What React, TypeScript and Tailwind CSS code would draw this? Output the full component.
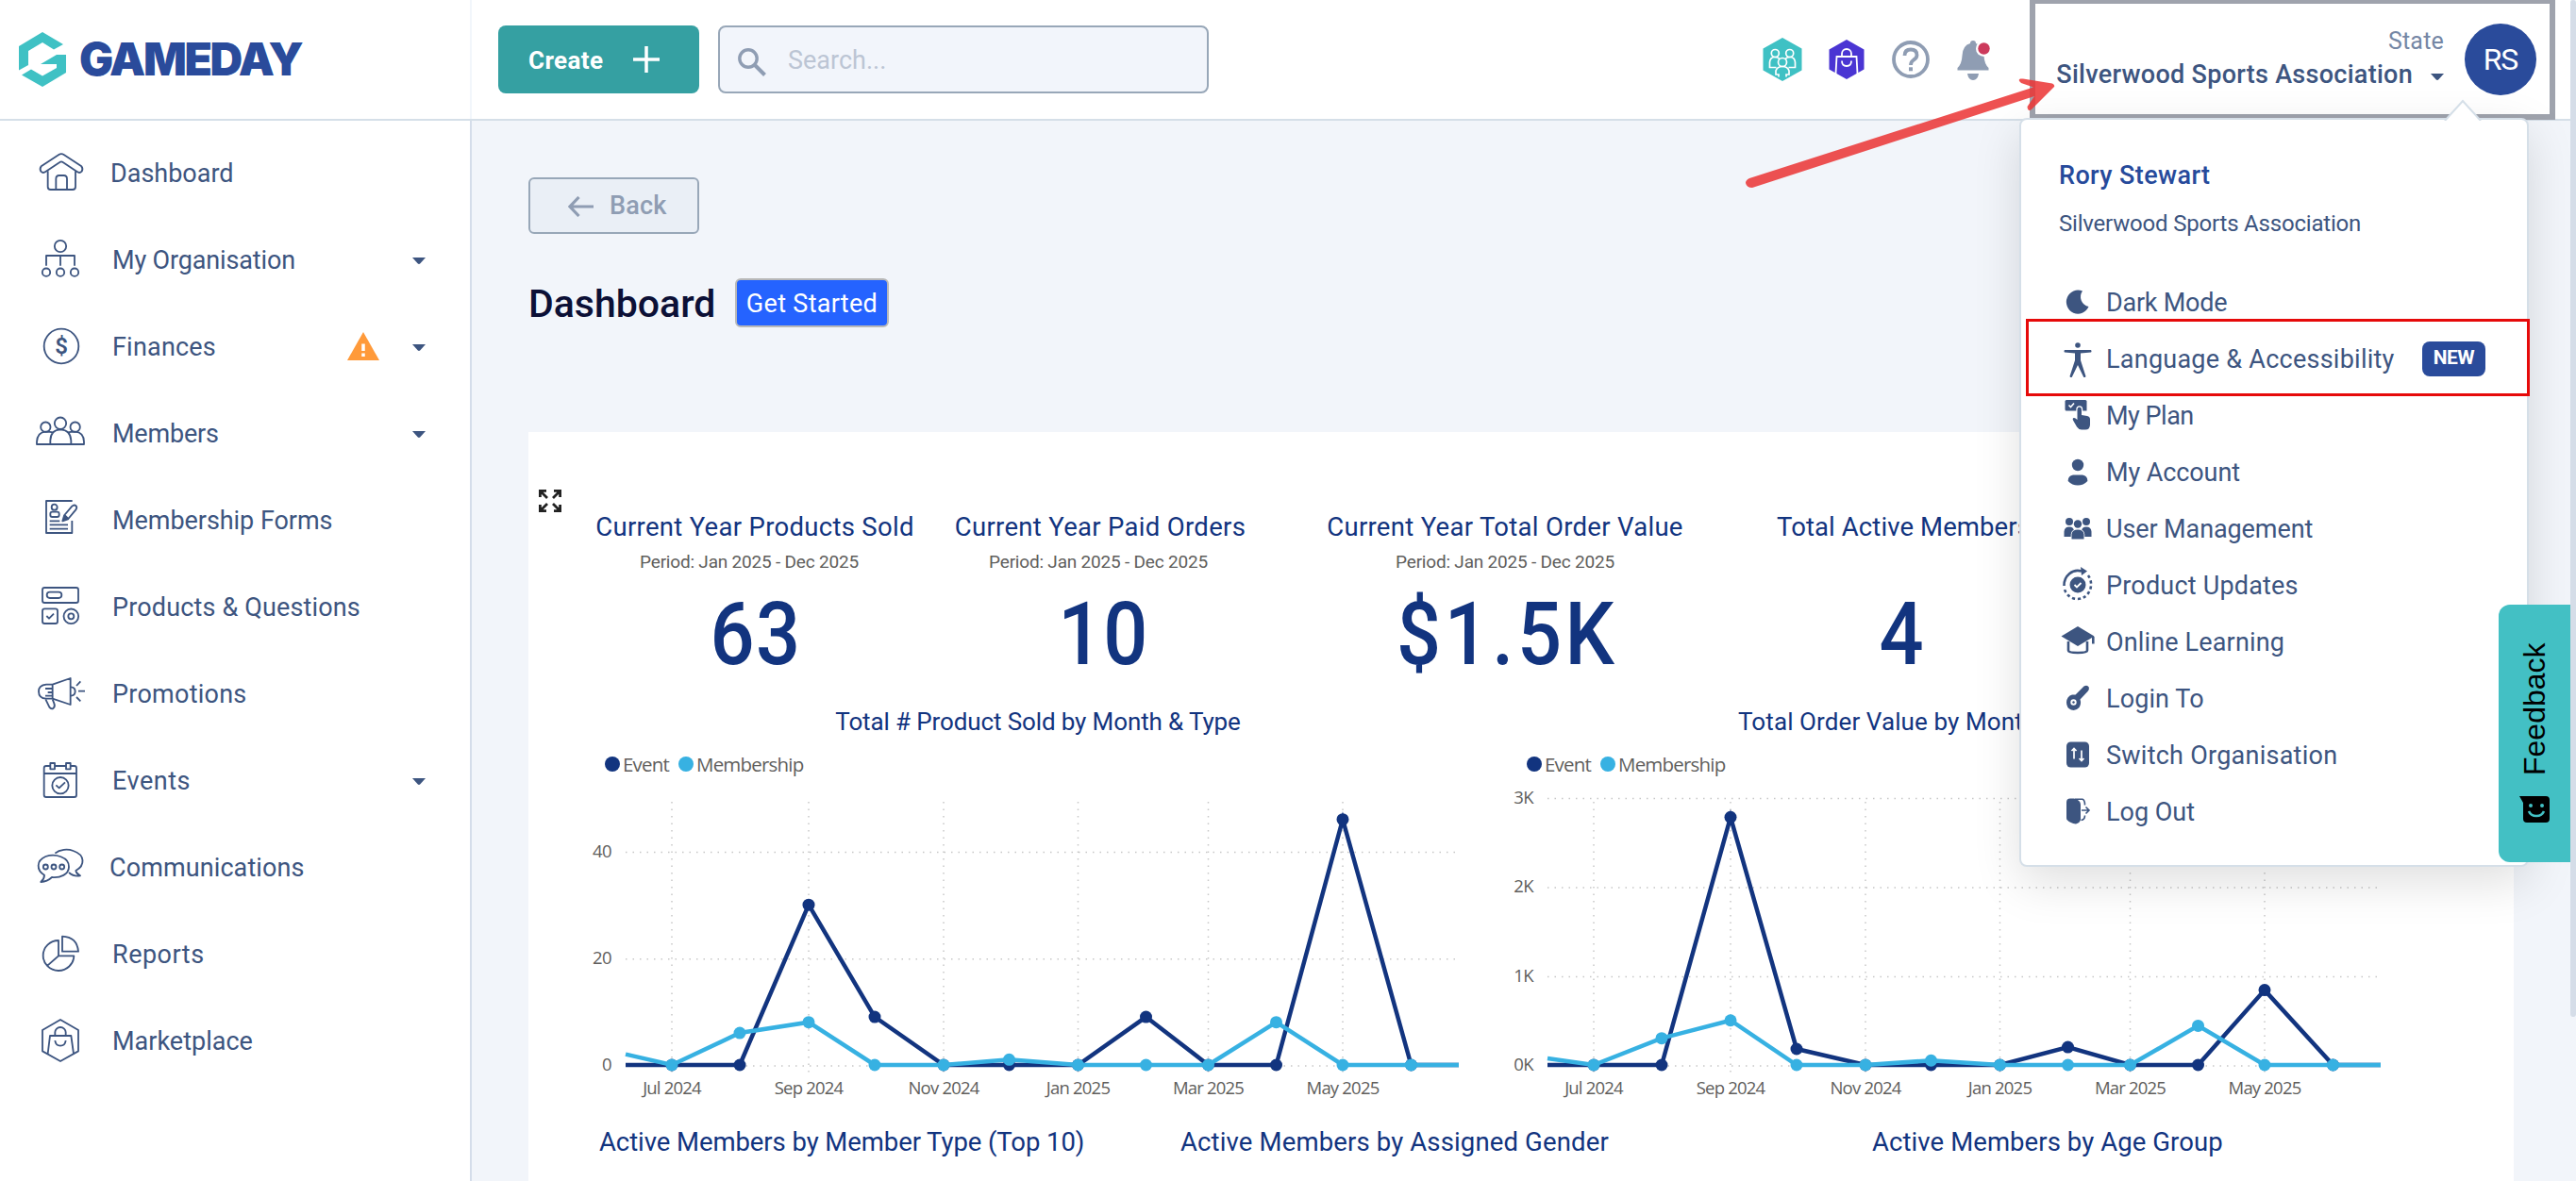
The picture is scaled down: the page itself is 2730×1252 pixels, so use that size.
import type { ReactNode } from 'react';

interface NavItem {
  label: string;
  icon: ReactNode;
  labelClass: string;
  expandable?: boolean;
  warning?: boolean;
}

interface MenuItem {
  label: string;
  icon: ReactNode;
  labelClass: string;
  isNew?: boolean;
}

function NavIcon({ children }: { children: ReactNode }) {
  return (
    <svg viewBox="-84 -84 168 168" className="h-14 w-14 shrink-0" fill="none" stroke="currentColor" strokeWidth="5.5" strokeLinejoin="round">
      {children}
    </svg>
  );
}

function MenuIcon({ children }: { children: ReactNode }) {
  return (
    <svg viewBox="-20 -20 40 40" className="h-10 w-10 shrink-0" fill="currentColor">
      {children}
    </svg>
  );
}

function Caret() {
  return (
    <svg viewBox="0 0 14 7" className="h-[7px] w-[14px] shrink-0" fill="#3d5580">
      <path d="M0 0h14L8.4 6.3Q7 7.6 5.6 6.3Z" />
    </svg>
  );
}

const navItems: NavItem[] = [
  {
    label: 'Dashboard',
    labelClass: '-ml-[2px]',
    icon: (
      <NavIcon>
        <path d="M-64-20-8-57Q0-62 8-57L64-20Q70-12 65-4 58 3 50-3L5-33Q0-37-5-33L-50-3Q-58 3-65-4-70-12-64-20Z" />
        <path d="M-43-5V45Q-43 54-34 54H36Q45 54 45 45V-5M-17 54V20Q-17 9-7 9H8Q18 9 18 20V54" />
      </NavIcon>
    ),
  },
  {
    label: 'My Organisation',
    labelClass: 'tracking-[-0.15px]',
    expandable: true,
    icon: (
      <NavIcon>
        <circle cx="-3" cy="-42" r="18.5" />
        <path d="M-48 20V-12H42V20M-3-12V20" />
        <circle cx="-48" cy="41" r="12.5" />
        <circle cx="-3" cy="41" r="12.5" />
        <circle cx="42" cy="41" r="12.5" />
      </NavIcon>
    ),
  },
  {
    label: 'Finances',
    labelClass: 'tracking-[0.2px]',
    expandable: true,
    warning: true,
    icon: (
      <NavIcon>
        <circle cx="0" cy="0" r="55" />
        <text x="0" y="25" textAnchor="middle" fontSize="72" fontWeight="600" fontFamily="Roboto" fill="currentColor" stroke="none">$</text>
      </NavIcon>
    ),
  },
  {
    label: 'Members',
    labelClass: 'tracking-[-0.2px]',
    expandable: true,
    icon: (
      <NavIcon>
        <circle cx="-3" cy="-31" r="18.5" />
        <circle cx="-50" cy="-19" r="15.5" />
        <circle cx="44" cy="-19" r="15.5" />
        <path d="M-35 36V24Q-34-10-3-11 29-10 31 24V36M-26-2Q-36-4-50-4-76-2-78 28V36H72V28Q71-2 44-4 30-4 20-2" />
      </NavIcon>
    ),
  },
  {
    label: 'Membership Forms',
    labelClass: 'tracking-[-0.05px]',
    icon: (
      <NavIcon>
        <path d="M35-60H-48V42H34V3M-37 4H-5M-37 16H21M-37 29H21" />
        <circle cx="-22" cy="-40" r="9" />
        <rect x="-35" y="-25" width="28" height="16" rx="6" />
        <path d="M10-15 34-43Q41-50 47-44 51-38 46-32L22-3Z" />
        <path d="M9-13 21-2 4 4Z" fill="currentColor" />
      </NavIcon>
    ),
  },
  {
    label: 'Products & Questions',
    labelClass: 'tracking-[0.15px]',
    icon: (
      <NavIcon>
        <rect x="-60" y="-60" width="114" height="48" rx="7" />
        <rect x="-46" y="-46" width="47" height="19" rx="9.5" />
        <rect x="-60" y="7" width="48" height="47" rx="7" />
        <path d="M-47 30-39 38-24 23" />
        <circle cx="31" cy="31" r="23.5" />
        <circle cx="31" cy="31" r="9" />
      </NavIcon>
    ),
  },
  {
    label: 'Promotions',
    labelClass: 'tracking-[0.25px]',
    icon: (
      <NavIcon>
        <path d="M-28-28H-48Q-72-26-72-6-72 16-48 17H-28L29 36V-48L-28-28V17M-51-15H-28M-43-3H-28M-51 8H-28" />
        <path d="M30-20Q44-19 44-6 44 7 30 8M-50 19-38 44Q-32 52-25 47-19 42-23 32L-28 19M48-24 61-38M54-7H75M48 12 61 25" />
      </NavIcon>
    ),
  },
  {
    label: 'Events',
    labelClass: 'tracking-[0.5px]',
    expandable: true,
    icon: (
      <NavIcon>
        <rect x="-55" y="-45" width="103" height="99" rx="7" />
        <path d="M-55-21H48" />
        <rect x="-35" y="-54" width="14" height="19" fill="white" />
        <rect x="15" y="-54" width="14" height="19" fill="white" />
        <circle cx="-3" cy="17" r="26" />
        <path d="M-17 16-7 25 12 7" />
      </NavIcon>
    ),
  },
  {
    label: 'Communications',
    labelClass: '-ml-[3px] tracking-[0.1px]',
    icon: (
      <NavIcon>
        <path d="M-54 26C-80 10-80-20-50-33-20-43 25-32 24 0 24 24-4 36-30 33Q-45 47-65 48-54 38-54 26ZM-20-43C-5-56 20-58 38-51 76-38 76-5 46 12Q48 22 60 28 40 32 24 18" />
        <circle cx="-50" cy="0" r="7.5" />
        <circle cx="-24" cy="0" r="7.5" />
        <circle cx="2" cy="0" r="7.5" />
      </NavIcon>
    ),
  },
  {
    label: 'Reports',
    labelClass: 'tracking-[0.5px]',
    icon: (
      <NavIcon>
        <path d="M-9-42A49 48 0 1 0 40 7H-9ZM-9 7-44 38M3-55V-7H54Q50-53 3-55Z" />
      </NavIcon>
    ),
  },
  {
    label: 'Marketplace',
    labelClass: '',
    icon: (
      <NavIcon>
        <path d="M-3-66 54-33V34L-3 66-60 34V-33ZM-43 42-36-15H31L39 42M-20-17V-26A17 16 0 0 1 14-26V-17M-20 0Q-18 17-3 17 12 17 14 0" />
      </NavIcon>
    ),
  },
];

const menuItems: MenuItem[] = [
  {
    label: 'Dark Mode',
    labelClass: 'tracking-[-0.25px]',
    icon: (
      <MenuIcon>
        <path d="M5-11.500A12.300 12.600 0 1 0 11.500 5 10.500 10.500 0 0 1 5-11.500Z" />
      </MenuIcon>
    ),
  },
  {
    label: 'Language & Accessibility',
    labelClass: 'tracking-[0.25px]',
    isNew: true,
    icon: (
      <MenuIcon>
        <circle cx="0" cy="-14" r="2.800" />
        <path d="M-14-9H14Q15-7.500 14-6.500L3-5.500V2L8.500 19Q7.500 21 6.300 20L0 7-6.300 20Q-7.500 21-8.500 19L-3 2V-5.500L-14-6.500Q-15-7.500-14-9Z" />
      </MenuIcon>
    ),
  },
  {
    label: 'My Plan',
    labelClass: 'tracking-[-0.5px]',
    icon: (
      <MenuIcon>
        <path d="M-12-16H8Q9.500-16 9.500-14.500V-4.500H-12Q-13.500-4.500-13.500-6V-14.500Q-13.500-16-12-16Z" />
        <path d="M-9.500-10.500-7.500-8.500-4-12.500" fill="none" stroke="white" strokeWidth="1.600" />
        <path d="M-.5 1V-6Q-.5-8.500 1.800-8.500 4-8.500 4-6V0L10 1Q13 1.500 13 4.500V10Q13 15.500 8 15.500H4Q1 15.500-1 12.500L-5 5.500Q-6 3.500-4.500 3-3 2.500-.5 5Z" stroke="white" strokeWidth="2.400" paintOrder="stroke" />
      </MenuIcon>
    ),
  },
  {
    label: 'My Account',
    labelClass: 'tracking-[-0.1px]',
    icon: (
      <MenuIcon>
        <circle cx="0" cy="-7" r="6.200" />
        <path d="M-5 3.500H5Q10.500 4.500 10.300 10 6 14.500 0 14.500-6 14.500-10.300 10-10.500 4.500-5 3.500Z" />
      </MenuIcon>
    ),
  },
  {
    label: 'User Management',
    labelClass: 'tracking-[-0.1px]',
    icon: (
      <MenuIcon>
        <circle cx="-9" cy="-7" r="4" />
        <circle cx="9" cy="-7" r="4" />
        <path d="M-14.500 9V3.500Q-14-1.500-9-1.500T-4 3.500V9ZM14.500 9V3.500Q14-1.500 9-1.500T4 3.500V9Z" />
        <g stroke="white" strokeWidth="1.600" paintOrder="stroke">
          <path d="M-6.500 11.500V6.500Q-6 1.500 0 1.500T6.500 6.500V11.500Z" />
          <circle cx="0" cy="-4.500" r="4.200" />
        </g>
      </MenuIcon>
    ),
  },
  {
    label: 'Product Updates',
    labelClass: 'tracking-[0.2px]',
    icon: (
      <MenuIcon>
        <circle cx="0" cy="0" r="8.500" />
        <path d="M-3.500 0-1 2.500 3.500-2" fill="none" stroke="white" strokeWidth="1.800" />
        <path d="M-14.500 1A14.500 15.500 0 0 1 4-14.500" fill="none" stroke="currentColor" strokeWidth="2.600" />
        <path d="M3-19 10-14.500 4-10Z" />
        <path d="M11-10A14.500 15.500 0 1 1-14 5" fill="none" stroke="currentColor" strokeWidth="2.600" strokeDasharray="3.200 2.800" />
      </MenuIcon>
    ),
  },
  {
    label: 'Online Learning',
    labelClass: 'tracking-[0.15px]',
    icon: (
      <MenuIcon>
        <path d="M-17.500-5.500 0-16 17.500-5.500 0 5Z" />
        <path d="M-10 0V9.500Q-10 12 0 12T10 9.500V0M16.300-5V2.500" fill="none" stroke="currentColor" strokeWidth="2.600" />
      </MenuIcon>
    ),
  },
  {
    label: 'Login To',
    labelClass: 'tracking-[0.1px]',
    icon: (
      <MenuIcon>
        <path fillRule="evenodd" d="M6.500-12.500Q10-14.500 11.800-11.500 12.500-9 10.500-7L2.500 1.500Q4 6 1.500 10-2 14-7 12.500-12 10.500-12 4.500-11.500-2-6-3.500H-2.500ZM-4.500 1.300A3.200 3.200 0 1 0-4.500 7.700 3.200 3.200 0 1 0-4.500 1.300Z" />
        <circle cx="-4.500" cy="4.500" r="1.200" />
      </MenuIcon>
    ),
  },
  {
    label: 'Switch Organisation',
    labelClass: 'tracking-[0.25px]',
    icon: (
      <MenuIcon>
        <rect x="-12" y="-13.500" width="24" height="27" rx="4.500" />
        <path d="M-4 4.500V-5.500M-6.500-4-4-6.500-1.500-4M4-4.500V5.500M1.500 4 4 6.500 6.500 4" fill="none" stroke="white" strokeWidth="1.700" />
      </MenuIcon>
    ),
  },
  {
    label: 'Log Out',
    labelClass: '',
    icon: (
      <MenuIcon>
        <path d="M-8-13.500H-4Q3-12 3-7V9Q2 12.500-2 13.500-8 12.500-11 9.500-12 9-12 7V-9.500Q-12-13.500-8-13.500Z" />
        <path d="M-3-12.700H5Q7.500-12 7.500-6.500M7.500 4.500Q7.500 9 3.500 9.500M4-1H12M8.500-4.500 12-1 8.500 2.500" fill="none" stroke="currentColor" strokeWidth="1.600" />
      </MenuIcon>
    ),
  },
];

const metrics = [
  { title: 'Current Year Products Sold', value: '63', period: true, width: 'w-[366px]', titleClass: 'tracking-[0.3px]', periodClass: 'pr-3', valueClass: 'pl-[2px] tracking-[1.500px]' },
  { title: 'Current Year Paid Orders', value: '10', period: true, width: 'w-[366px]', titleClass: 'tracking-[0.300px]', periodClass: 'pr-1', valueClass: 'pl-[7px] tracking-[1px]' },
  { title: 'Current Year Total Order Value', value: '$1.5K', period: true, width: 'w-[492px]', titleClass: 'tracking-[0.3px]', periodClass: '', valueClass: 'pl-[5px] tracking-[4px]' },
  { title: 'Total Active Members', value: '4', period: false, width: 'w-[348px]', titleClass: 'pl-[5px] tracking-[0.1px]', periodClass: '', valueClass: '' },
];

const months = ['Jul 2024', 'Sep 2024', 'Nov 2024', 'Jan 2025', 'Mar 2025', 'May 2025'];

// Pixel offsets of each data point from the left edge of the plot (Jun 2024 .. Jul 2025)
const pointX = [46, 95, 167, 240, 310, 383, 452.5, 525.5, 597.5, 663.5, 735.5, 806, 878.5, 929];

interface LineChartProps {
  events: number[];
  memberships: number[];
  ticks: { value: number; label: string }[];
  pxPerUnit: number;
  top: number;
}

function LineChart({ events, memberships, ticks, pxPerUnit, top }: LineChartProps) {
  const zero = 303;
  const y = (value: number) => zero - value * pxPerUnit;
  const series = [
    { color: '#12347f', values: events },
    { color: '#37b1e2', values: memberships },
  ];

  return (
    <svg viewBox="0 0 940 353" className="h-[353px] w-[940px]" fontFamily="'Open Sans'" fontSize="18.5" fontWeight="400" fill="#605e5c">
      <g stroke="#c8c8c8" strokeWidth="1.500" strokeDasharray="1.500 6">
        {ticks.map((tick) => (
          <line key={tick.label} x1="46" x2="929" y1={y(tick.value) + 1} y2={y(tick.value) + 1} />
        ))}
        {months.map((month, i) => (
          <line key={month} x1={pointX[i * 2 + 1]} x2={pointX[i * 2 + 1]} y1={top} y2="312" />
        ))}
      </g>
      {ticks.map((tick) => (
        <text key={tick.label} x="31" y={y(tick.value) + 6} textAnchor="end" letterSpacing="-0.6">{tick.label}</text>
      ))}
      {months.map((month, i) => (
        <text key={month} x={pointX[i * 2 + 1]} y="334" textAnchor="middle" letterSpacing="-0.8">{month}</text>
      ))}
      {series.map(({ color, values }) => (
        <g key={color}>
          <polyline points={values.map((v, i) => `${pointX[i]},${y(v)}`).join(' ')} fill="none" stroke={color} strokeWidth="4.500" />
          {values.slice(1, -1).map((v, i) => (
            <circle key={i} cx={pointX[i + 1]} cy={y(v)} r="6.500" fill={color} />
          ))}
        </g>
      ))}
    </svg>
  );
}

function Legend() {
  return (
    <div className="mt-[9px] ml-6 flex h-8 items-center gap-[3px] font-['Open_Sans',sans-serif] text-[20.500px] font-normal text-[#605e5c]">
      <span className="h-4 w-4 rounded-full bg-[#12347f]" />
      <span className="w-[56px] tracking-[-0.8px]">Event</span>
      <span className="h-4 w-4 rounded-full bg-[#37b1e2]" />
      <span className="tracking-[-0.8px]">Membership</span>
    </div>
  );
}

function Sidebar() {
  return (
    <nav className="w-[500px] shrink-0 border-r-2 border-[#d5ddea] bg-white pt-[9px] text-[#3d5580]">
      {navItems.map((item) => (
        <a key={item.label} className="flex h-[92px] items-center pr-[47px] pl-[37px]">
          {item.icon}
          <span className="ml-[26px] flex-1 pt-[2px] text-[27px] whitespace-nowrap">
            <span className={`inline-block ${item.labelClass}`}>{item.label}</span>
          </span>
          {item.warning && (
            <svg viewBox="0 0 34 30" className="mr-[35px] h-[30px] w-[34px]">
              <path d="M17 0 34 30H0Z" fill="#ff9a3a" />
              <path d="M17 12.500v7.500M17 22.500v3.500" stroke="white" strokeWidth="3.500" />
            </svg>
          )}
          {item.expandable && <span className="flex pt-[2px]"><Caret /></span>}
        </a>
      ))}
    </nav>
  );
}

function UserMenu() {
  return (
    <div className="absolute top-[125px] left-[2140px] z-20 h-[794px] w-[540px] rounded-lg border-2 border-[#d5dfe8] bg-white pl-10 text-[#3d5580] shadow-[0_16px_50px_rgba(0,0,0,0.13)]">
      <svg viewBox="0 0 40 23" className="absolute -top-[22px] left-[448px] h-[23px] w-10">
        <path d="M1 23 20 2 39 23" fill="white" stroke="#d5dfe8" strokeWidth="2" />
      </svg>
      <p className="mt-[39px] h-10 text-[27px] leading-10 font-medium tracking-[0.400px] text-[#264a9b]">Rory Stewart</p>
      <p className="mt-[11px] h-10 text-[24px] leading-10 tracking-[-0.2px]">Silverwood Sports Association</p>
      <ul className="mt-[33px]">
        {menuItems.map((item) => (
          <li key={item.label} className="relative flex h-[60px] items-center text-[27px]">
            {item.icon}
            <span className={`ml-[10px] pt-[2px] whitespace-nowrap ${item.labelClass}`}>{item.label}</span>
            {item.isNew && (
              <>
                <span className="absolute left-[385px] flex h-[37px] w-[67px] items-center justify-center rounded-lg bg-[#2a4b9b] text-[21px] font-bold tracking-[-0.5px] text-white">
                  NEW
                </span>
                <span className="absolute -top-[12px] -left-[35px] h-[82px] w-[534px] border-3 border-[#e60a0a]" />
              </>
            )}
          </li>
        ))}
      </ul>
    </div>
  );
}

function Header() {
  return (
    <header className="flex h-32 items-center border-b-2 border-[#d5dfe8] bg-white">
      <div className="flex h-full w-[500px] items-center border-r-2 border-[#f2f6fb] pl-5">
        <svg viewBox="0 0 50 58" className="h-[58px] w-[50px]" fill="#3fc1c4">
          <path d="M25 0 47 13 37 18.500 25 11 10 20V35L0 40.500V15ZM50 24V43L25 58 3 45.500 13 39.500 25 46.500 40 38V34H23L40 24Z" />
        </svg>
        <span className="ml-[14px] font-['Inter',sans-serif] text-[48px] leading-none font-black tracking-[-2.300px] text-[#2a4b9b]">GAMEDAY</span>
      </div>

      <button className="ml-7 flex h-[72px] w-[213px] items-center rounded-lg bg-[#35a0a2] pl-8 text-[26px] font-bold text-white">
        <span className="w-[111px] pt-[2px] text-left tracking-[0.4px]">Create</span>
        <svg viewBox="0 0 28 28" className="-mt-px h-7 w-7" stroke="white" strokeWidth="3.500">
          <path d="M14 0V28M0 14H28" />
        </svg>
      </button>

      <div className="ml-5 flex h-[72px] w-[520px] items-center rounded-lg border-2 border-[#98a7b8] bg-[#f2f5fb] pl-[19px]">
        <svg viewBox="0 0 30 30" className="mt-[6px] h-[30px] w-[30px]" fill="none" stroke="#8f9db3">
          <circle cx="11" cy="11" r="9.200" strokeWidth="3.400" />
          <path d="M17.500 17.500 28.500 28.500" strokeWidth="4" />
        </svg>
        <span className="ml-[23px] pt-[3px] text-[27px] text-[#bcc5d4]">Search...</span>
      </div>

      <div className="ml-auto flex items-center">
        <svg viewBox="0 0 42 46" className="h-[46px] w-[42px]" fill="none" stroke="white" strokeWidth="1.700">
          <path d="M21 0 41.500 11.500V34.500L21 46 .5 34.500V11.500Z" fill="#3fc1c4" stroke="none" />
          <circle cx="13.300" cy="16.500" r="4" />
          <circle cx="28.700" cy="16.500" r="4" />
          <circle cx="21" cy="26" r="4.500" />
          <path d="M14.500 31.500H7.500V26Q8 20.500 13 20.500 17 20.500 18 23M27.500 31.500H34.500V26Q34 20.500 29 20.500 25 20.500 24 23M17 41.500V39H14V35Q15.500 30.500 21 30.500T28 35V39H25V41.500" />
        </svg>
        <svg viewBox="0 0 38 42" className="ml-[28px] h-[42px] w-[38px]" fill="none" stroke="white" strokeWidth="1.800">
          <path d="M19 0 37.500 10.500V31.500L19 42 .5 31.500V10.500Z" fill="#4a35d3" stroke="none" />
          <path d="M7.500 36 8.500 18H29.500L30.500 36M14 18V15A5 5 0 0 1 24 15V18M14 22.500Q14 28 19 28T24 22.500" />
        </svg>
        <svg viewBox="0 0 40 40" className="ml-[29px] h-10 w-10" fill="none" stroke="#8f9db3" strokeWidth="3.800">
          <circle cx="20" cy="20" r="18" />
          <path d="M13.500 16Q13.500 9.500 20 9.500T26.500 15.500Q26.500 18.500 23 20.500 20 22.500 20 26" />
          <path d="M20 28.300V32.300" strokeWidth="4" />
        </svg>
        <svg viewBox="0 0 36 44" className="mt-[2px] ml-[29px] h-11 w-9" fill="#8f9db3">
          <path d="M14 4Q14 1 17 1T20 4Q28 6 28.500 17 29 26 33.500 30V32.500H.5V30Q5 26 5.500 17 6 6 14 4ZM11 36H23Q22 43 17 43T11 36Z" />
          <circle cx="28.500" cy="9.500" r="8.500" fill="white" />
          <circle cx="28.500" cy="9.500" r="6.200" fill="#cc3a5c" />
        </svg>

        <div className="mr-4 ml-[41px] flex h-[128px] w-[557px] items-center justify-end border-6 border-t-5 border-[#9fa3ad] pr-[14px]">
          <div className="mr-[22px]">
            <p className="mb-[2px] h-[31px] text-right text-[25px] leading-[31px] tracking-[0.2px] text-[#7587a5]">State</p>
            <p className="flex h-9 items-center text-[27px] font-medium tracking-[0.280px] text-[#3d5580]">
              Silverwood Sports Association
              <span className="mt-[5px] ml-[19px] flex"><Caret /></span>
            </p>
          </div>
          <span className="flex h-[76px] w-[76px] items-center justify-center rounded-full bg-[#2a4b9b] text-[32px] tracking-[-1px] text-white">RS</span>
        </div>
      </div>
    </header>
  );
}

function Dashboard() {
  return (
    <main className="flex-1 pt-[60px] pl-[60px]">
      <button className="flex h-[60px] w-[181px] items-center rounded-md border-2 border-[#98a7b8] bg-[#eaeff6] pl-10 text-[27px] text-[#8f9db3]">
        <svg viewBox="0 0 27 22" className="mt-px h-[22px] w-[27px]" fill="none" stroke="currentColor" strokeWidth="3.200">
          <path d="M27 11H2M11.500 1 2 11 11.500 21" />
        </svg>
        <span className="ml-[17px] font-medium tracking-[0.2px]">Back</span>
      </button>

      <div className="mt-[46px] flex h-[54px] items-center">
        <h1 className="w-[219px] pt-[3px] text-[41px] font-medium whitespace-nowrap text-[#0c1036]">Dashboard</h1>
        <button className="h-[52px] w-[163px] rounded-md border-2 border-[#b8b8b8] bg-[#2563ff] pt-[3px] text-[27px] tracking-[0.3px] text-white">
          Get Started
        </button>
      </div>

      <section className="mt-[110px] h-[794px] w-[2104px] bg-white pt-[61px] pl-[11px] text-[#12347f]">
        <div className="flex">
          <svg viewBox="0 0 24 24" className="h-6 w-6" fill="none" stroke="#222" strokeWidth="2.800">
            <path d="M1.400 8V1.400H8M16 1.400H22.600V8M22.600 16V22.600H16M8 22.600H1.400V16M2 2 9 9M22 2 15 9M22 22 15 15M2 22 9 15" />
          </svg>
          <div className="mt-5 ml-[22px] flex h-[206px]">
            {metrics.map((metric) => (
              <div key={metric.title} className={`text-center whitespace-nowrap ${metric.width}`}>
                <h2 className={`text-[27.500px] leading-10 ${metric.titleClass}`}>{metric.title}</h2>
                <p className={`mt-[2px] h-[30px] text-[19px] leading-[30px] tracking-[-0.2px] text-[#605e5c] ${metric.periodClass}`}>
                  {metric.period && 'Period: Jan 2025 - Dec 2025'}
                </p>
                <p className={`mt-[12px] scale-x-90 text-[92px] leading-[100px] font-medium ${metric.valueClass}`}>{metric.value}</p>
              </div>
            ))}
          </div>
        </div>

        <div className="flex h-[434px] text-[26px] leading-10">
          <div className="w-[978px] pl-[46px]">
            <h2 className="w-[966px] text-center tracking-[-0.120px]">Total # Product Sold by Month &amp; Type</h2>
            <Legend />
            <LineChart
              events={[0, 0, 0, 30, 9, 0, 0, 0, 9, 0, 0, 46, 0, 0]}
              memberships={[2, 0, 6, 8, 0, 0, 1, 0, 0, 0, 8, 0, 0, 0]}
              ticks={[{ value: 0, label: '0' }, { value: 20, label: '20' }, { value: 40, label: '40' }]}
              pxPerUnit={5.66}
              top={24}
            />
          </div>
          <div className="w-[1040px] pl-[45px]">
            <h2 className="pl-[248px] tracking-[0.1px]">Total Order Value by Month &amp; Type</h2>
            <Legend />
            <LineChart
              events={[0, 0, 0, 2780, 180, 0, 0, 0, 200, 0, 0, 840, 0, 0]}
              memberships={[75, 0, 300, 500, 0, 0, 50, 0, 0, 0, 440, 0, 0, 0]}
              ticks={[{ value: 0, label: '0K' }, { value: 1000, label: '1K' }, { value: 2000, label: '2K' }, { value: 3000, label: '3K' }]}
              pxPerUnit={0.0945}
              top={24}
            />
          </div>
        </div>

        <div className="mt-[12px] flex pl-[64px] text-[27.500px] leading-10 whitespace-nowrap">
          <h2 className="w-[616px] tracking-[-0.080px]">Active Members by Member Type (Top 10)</h2>
          <h2 className="w-[733px] tracking-[0.140px]">Active Members by Assigned Gender</h2>
          <h2 className="tracking-[0.080px]">Active Members by Age Group</h2>
        </div>
      </section>
    </main>
  );
}

export default function App() {
  return (
    <div className="relative flex h-[1252px] w-[2730px] overflow-hidden bg-[#f2f5fa] font-['Roboto',sans-serif]">
      <div className="flex w-[2724px] flex-col">
        <Header />
        <div className="flex flex-1 overflow-hidden">
          <Sidebar />
          <Dashboard />
        </div>
      </div>
      <div className="h-[1078px] w-[6px] rounded-[3px] bg-[#d5dde8]" />

      <UserMenu />

      {/* Pointer from the header to the account switcher */}
      <svg viewBox="0 0 340 130" className="absolute top-[76px] left-[1844px] z-30 h-[130px] w-[340px]">
        <path
          d="M10 113 311 16.500 298 12Q294 9 297 7.500L300 7.500 331 12.500Q334 14 333 16L309 40Q305 43 304.500 37L312 26 13 123Q7 123 6 118 6 115 10 113Z"
          fill="#eb3434"
          fillOpacity="0.86"
        />
      </svg>

      <button className="absolute top-[641px] left-[2648px] z-30 flex h-[273px] w-[76px] flex-col items-center rounded-l-[12px] bg-[#43c0c4] pt-[38px] text-black">
        <span className="h-[145px] rotate-180 font-['Liberation_Sans',sans-serif] text-[32px] leading-9 [writing-mode:vertical-rl]">Feedback</span>
        <svg viewBox="0 0 32 28" className="mt-5 h-7 w-8">
          <path d="M0 0H28Q32 0 32 4V24Q32 28 28 28H8Q4 28 4 24V7Z" />
          <path d="M10 16Q12 21 18 21T26 16" fill="none" stroke="#43c0c4" strokeWidth="2.500" />
          <circle cx="12" cy="10" r="2" fill="#43c0c4" />
          <circle cx="24" cy="10" r="2" fill="#43c0c4" />
        </svg>
      </button>
    </div>
  );
}
